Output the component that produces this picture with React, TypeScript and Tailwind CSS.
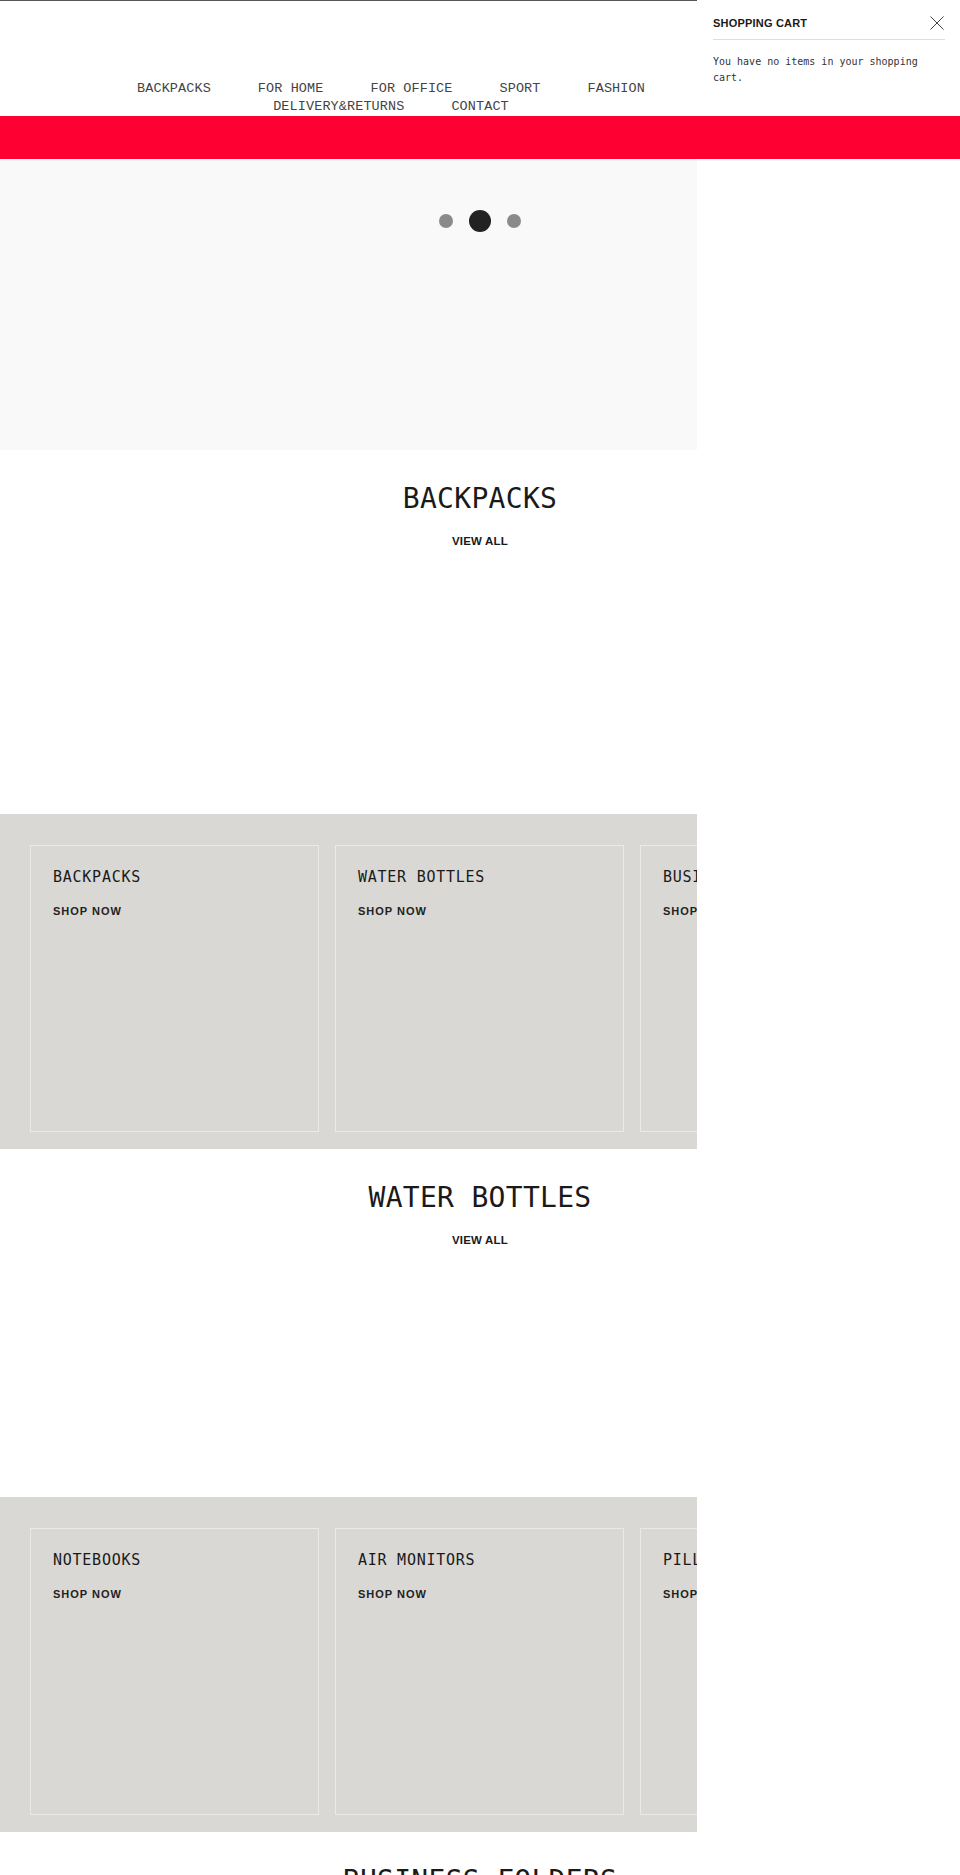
import React from "react";

const navItems = ["BACKPACKS", "FOR HOME", "FOR OFFICE", "SPORT", "FASHION", "DELIVERY&RETURNS", "CONTACT"];

const mono = "font-['DejaVu_Sans_Mono',monospace]";
const navMono = "font-['Liberation_Mono',monospace]";
const sans = "font-['Liberation_Sans',Arial,sans-serif]";

function Header() {
  return (
    <header className="h-[116px] border-t border-[#555] flex flex-col justify-end">
      <nav className={`ml-[101px] w-[580px] flex flex-wrap justify-center gap-x-[47px] ${navMono} text-[13.5px] leading-[18px] tracking-[0.1px] text-[#444]`}>
        {navItems.map((item) => (
          <a key={item} href="#">{item}</a>
        ))}
      </nav>
    </header>
  );
}

function Hero() {
  return (
    <section className="h-[291px] bg-[#f9f9f9] pt-[51px]">
      <div className="flex items-center justify-center gap-[16px]">
        <span className="w-[14px] h-[14px] rounded-full bg-[#8a8a8a]" />
        <span className="w-[22px] h-[22px] rounded-full bg-[#222]" />
        <span className="w-[14px] h-[14px] rounded-full bg-[#8a8a8a]" />
      </div>
    </section>
  );
}

function ProductSection({ title, height }: { title: string; height: string }) {
  return (
    <section className={`${height} pt-[32px] text-center`}>
      <h2 className={`${mono} text-[28px] leading-[34px] tracking-[0.3px] text-[#1a1a1a]`}>{title}</h2>
      <a href="#" className={`inline-block mt-[17px] ${sans} font-bold text-[11.5px] leading-[16px] tracking-[0.2px] text-[#1a1a1a]`}>
        VIEW ALL
      </a>
    </section>
  );
}

function CategoryRow({ items }: { items: string[] }) {
  return (
    <section className="bg-[#d9d8d4] pt-[31px] pb-[17px] pl-[30px] flex gap-[16px] overflow-hidden">
      {items.map((item) => (
        <div key={item} className="w-[289px] h-[287px] shrink-0 border border-[#ebeae7] pt-[21px] pl-[22px]">
          <h3 className={`${mono} text-[15px] leading-[20px] tracking-[0.75px] text-[#1a1a1a]`}>{item}</h3>
          <a href="#" className={`block mt-[16px] ${sans} font-bold text-[11px] leading-[16px] tracking-[1px] text-[#222]`}>
            SHOP NOW
          </a>
        </div>
      ))}
    </section>
  );
}

function CartDrawer() {
  return (
    <aside className="absolute top-0 right-0 bottom-0 w-[263px] bg-white z-10 pl-[16px] pr-[15px] pt-[15px]">
      <div className="flex items-center justify-between h-[16px]">
        <span className={`${sans} font-bold text-[11px] tracking-[0.2px] text-[#1a1a1a]`}>SHOPPING CART</span>
        <svg width="14" height="14" viewBox="0 0 14 14" className="mr-[1px]">
          <path d="M0.5 0.5 L13.5 13.5 M13.5 0.5 L0.5 13.5" stroke="#444" strokeWidth="1" fill="none" />
        </svg>
      </div>
      <div className="mt-[8px] border-b border-[#dddddd]" />
      <p className={`mt-[14px] ${mono} text-[10px] leading-[16px] text-[#333]`}>
        You have no items in your shopping cart.
      </p>
    </aside>
  );
}

export default function App() {
  return (
    <div className="relative w-[960px] h-[1875px] bg-white overflow-hidden">
      <Header />
      <div className="relative z-20 h-[43px] bg-[#ff0033]" />
      <Hero />
      <ProductSection title="BACKPACKS" height="h-[364px]" />
      <CategoryRow items={["BACKPACKS", "WATER BOTTLES", "BUSINESS FOLDERS"]} />
      <ProductSection title="WATER BOTTLES" height="h-[348px]" />
      <CategoryRow items={["NOTEBOOKS", "AIR MONITORS", "PILLOWS"]} />
      <ProductSection title="BUSINESS FOLDERS" height="h-[364px]" />
      <CartDrawer />
    </div>
  );
}
